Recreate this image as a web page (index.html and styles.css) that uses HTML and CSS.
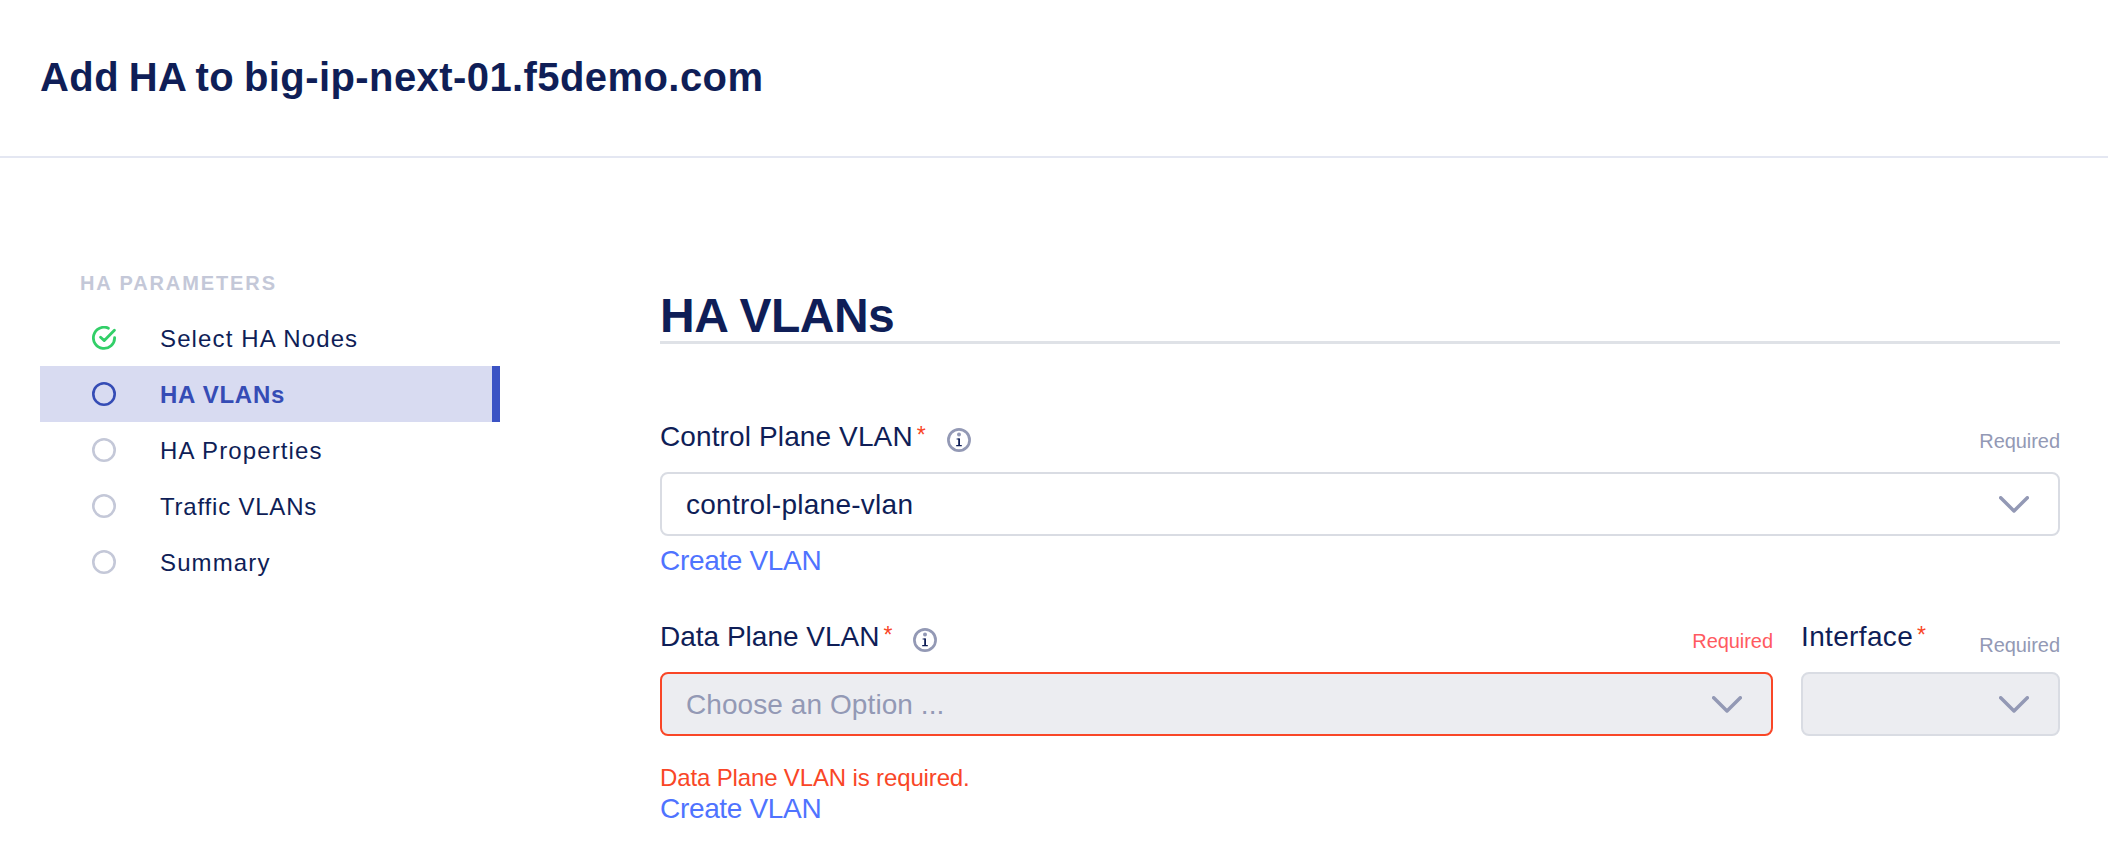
FILE: index.html
```html
<!DOCTYPE html>
<html lang="en">
<head>
<meta charset="utf-8">
<title>Add HA to big-ip-next-01.f5demo.com</title>
<link rel="stylesheet" href="styles.css">
</head>
<body>
<svg class="defs" width="0" height="0">
  <symbol id="circle" viewBox="0 0 24 24"><circle cx="12" cy="12" r="10.7" fill="none" stroke="currentColor" stroke-width="2.6"/></symbol>
  <symbol id="check" viewBox="0 0 24 24"><path d="M16.4 2.2A10.6 10.6 0 1 0 22.6 11.6M8.6 11.2L12.3 14.6L22.4 4.2" fill="none" stroke="currentColor" stroke-width="2.8" stroke-linecap="round" stroke-linejoin="round"/></symbol>
  <symbol id="info" viewBox="0 0 24 24"><circle cx="12" cy="12" r="10.6" fill="none" stroke="#9399b5" stroke-width="2.7"/><circle cx="12" cy="6.6" r="2" fill="#9399b5"/><path d="M9.6 11h2.8M9.2 17.6h5.6" fill="none" stroke="#0f1e57" stroke-width="1.2"/><path d="M12.1 10.4v7" stroke="#0f1e57" stroke-width="1.8"/></symbol>
  <symbol id="chevron" viewBox="0 0 30 17"><path d="M1.7 1.8L15 14.9L28.3 1.8" fill="none" stroke="#9399b5" stroke-width="3.5" stroke-linecap="round" stroke-linejoin="round"/></symbol>
</svg>
<header class="header"><h1 class="title">Add HA to big-ip-next-01.f5demo.com</h1></header>
<div class="layout">
  <nav class="steps">
    <div class="steps-title">HA PARAMETERS</div>
    <a class="step done"><svg class="icon"><use href="#check"/></svg><span>Select HA Nodes</span></a>
    <a class="step active"><svg class="icon"><use href="#circle"/></svg><span>HA VLANs</span></a>
    <a class="step"><svg class="icon"><use href="#circle"/></svg><span>HA Properties</span></a>
    <a class="step traffic"><svg class="icon"><use href="#circle"/></svg><span>Traffic VLANs</span></a>
    <a class="step"><svg class="icon"><use href="#circle"/></svg><span>Summary</span></a>
  </nav>
  <main class="content">
    <h2 class="section-title">HA VLANs</h2>
    <section class="field control">
      <div class="label-row"><label class="label wide">Control Plane VLAN</label><span class="star">*</span><svg class="icon info"><use href="#info"/></svg><span class="required">Required</span></div>
      <div class="select"><span class="value">control-plane-vlan</span><svg class="chevron"><use href="#chevron"/></svg></div>
      <a class="link">Create VLAN</a>
    </section>
    <div class="pair">
      <section class="field">
        <div class="label-row"><label class="label">Data Plane VLAN</label><span class="star">*</span><svg class="icon info"><use href="#info"/></svg><span class="required invalid">Required</span></div>
        <div class="select disabled error"><span class="placeholder">Choose an Option ...</span><svg class="chevron"><use href="#chevron"/></svg></div>
        <div class="message">Data Plane VLAN is required.</div>
        <a class="link">Create VLAN</a>
      </section>
      <section class="field">
        <div class="label-row"><label class="label interface">Interface</label><span class="star">*</span><span class="required low">Required</span></div>
        <div class="select disabled"><span></span><svg class="chevron"><use href="#chevron"/></svg></div>
      </section>
    </div>
  </main>
</div>
</body>
</html>
```
FILE: styles.css
```css
* { box-sizing: border-box; }
body {
  margin: 0;
  height: 846px;
  overflow: hidden;
  background: #fff;
  color: #0f1e57;
  font-family: "Liberation Sans", Arial, sans-serif;
}
.defs { display: block; }
.header {
  height: 158px;
  padding: 53px 40px 0;
  border-bottom: 2px solid #e4e7f2;
}
.title {
  margin: 0;
  font-size: 40px;
  line-height: 48px;
  letter-spacing: 0.42px;
  word-spacing: -1.8px;
}
.layout { display: flex; }
.steps { width: 460px; margin-left: 40px; padding-top: 113px; }
.steps-title {
  height: 39px;
  padding-left: 40px;
  color: #c4c8d8;
  font-size: 20px;
  font-weight: bold;
  line-height: 24px;
  letter-spacing: 1.9px;
}
.step {
  display: flex;
  align-items: center;
  gap: 44px;
  height: 56px;
  padding-left: 52px;
  font-size: 24px;
  line-height: 28px;
  letter-spacing: 1.12px;
}
.icon { width: 24px; height: 24px; flex: none; color: #c4c8d8; }
.step span { padding-top: 2px; }
.step.done .icon { color: #32cf68; }
.step.traffic { letter-spacing: 0.8px; }
.step.active {
  background: #d8dbf1;
  border-right: 8px solid #3b53c4;
  color: #354cb5;
  font-weight: bold;
  letter-spacing: 0.75px;
}
.step.active .icon { color: #354cb5; }
.content { width: 1400px; margin-left: 160px; padding-top: 127px; }
.section-title {
  margin: 0;
  height: 59px;
  border-bottom: 3px solid #dfe2e7;
  font-size: 48px;
  line-height: 62px;
  letter-spacing: -0.5px;
}
.field { display: flex; flex-direction: column; }
.control { padding-top: 76px; height: 276px; }
.label-row { display: flex; height: 52px; }
.label { font-size: 28px; line-height: 32px; padding-top: 1px; }
.label.wide { letter-spacing: 0.12px; }
.label.interface { letter-spacing: 0.35px; }
.star { margin-left: 4px; color: #f94627; font-size: 23px; line-height: 30px; }
.info { margin: 8px 0 0 21px; }
.required { margin: 9px 0 0 auto; color: #9399b5; font-size: 20px; line-height: 24px; letter-spacing: -0.05px; }
.required.invalid { color: #ff5a60; }
.required.low { margin-top: 13px; }
.select {
  display: flex;
  align-items: center;
  justify-content: space-between;
  height: 64px;
  padding: 0 29px 0 24px;
  border: 2px solid #d9dce3;
  border-radius: 8px;
  font-size: 28px;
  line-height: 32px;
}
.value, .placeholder { padding-top: 2px; }
.value { letter-spacing: 0.26px; }
.placeholder { color: #9399b5; letter-spacing: 0.08px; }
.chevron { width: 30px; height: 17px; }
.disabled { background: #ecedf1; }
.error { border-color: #f94627; }
.link {
  margin-top: 9px;
  color: #4f73ff;
  font-size: 28px;
  line-height: 32px;
  letter-spacing: -0.33px;
}
.pair { display: grid; grid-template-columns: 1113px 259px; gap: 28px; }
.message { margin-top: 28px; color: #f94627; font-size: 24px; line-height: 28px; letter-spacing: -0.14px; }
.message + .link { margin-top: 1px; }
```
